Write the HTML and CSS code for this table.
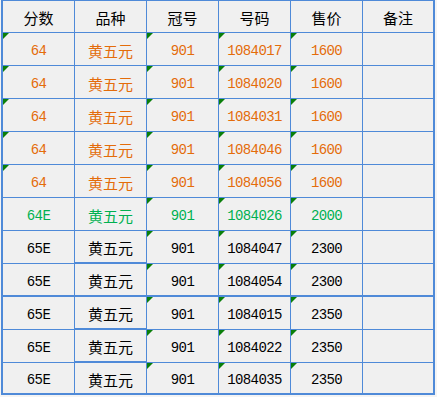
FILE: index.html
```html
<!DOCTYPE html>
<html lang="zh">
<head>
<meta charset="utf-8">
<title>Sheet</title>
<link rel="stylesheet" href="styles.css">
</head>
<body>
<table class="sheet">
  <tr class="head">
    <td>分数</td><td>品种</td><td>冠号</td><td>号码</td><td>售价</td><td class="last">备注</td>
  </tr>
  <tr class="orange">
    <td class="num"><i class="tri"></i>64</td><td class="cjk">黄五元</td><td class="num"><i class="tri"></i>901</td><td class="num"><i class="tri"></i>1084017</td><td class="num"><i class="tri"></i>1600</td><td class="last"></td>
  </tr>
  <tr class="orange">
    <td class="num"><i class="tri"></i>64</td><td class="cjk">黄五元</td><td class="num"><i class="tri"></i>901</td><td class="num"><i class="tri"></i>1084020</td><td class="num"><i class="tri"></i>1600</td><td class="last"></td>
  </tr>
  <tr class="orange">
    <td class="num"><i class="tri"></i>64</td><td class="cjk">黄五元</td><td class="num"><i class="tri"></i>901</td><td class="num"><i class="tri"></i>1084031</td><td class="num"><i class="tri"></i>1600</td><td class="last"></td>
  </tr>
  <tr class="orange">
    <td class="num"><i class="tri"></i>64</td><td class="cjk">黄五元</td><td class="num"><i class="tri"></i>901</td><td class="num"><i class="tri"></i>1084046</td><td class="num"><i class="tri"></i>1600</td><td class="last"></td>
  </tr>
  <tr class="orange">
    <td class="num"><i class="tri"></i>64</td><td class="cjk">黄五元</td><td class="num"><i class="tri"></i>901</td><td class="num"><i class="tri"></i>1084056</td><td class="num"><i class="tri"></i>1600</td><td class="last"></td>
  </tr>
  <tr class="green">
    <td class="num">64E</td><td class="cjk">黄五元</td><td class="num"><i class="tri"></i>901</td><td class="num"><i class="tri"></i>1084026</td><td class="num"><i class="tri"></i>2000</td><td class="last"></td>
  </tr>
  <tr class="black">
    <td class="num">65E</td><td class="cjk sel">黄五元</td><td class="num"><i class="tri"></i>901</td><td class="num"><i class="tri"></i>1084047</td><td class="num"><i class="tri"></i>2300</td><td class="last"></td>
  </tr>
  <tr class="black split">
    <td class="num">65E</td><td class="cjk">黄五元</td><td class="num"><i class="tri"></i>901</td><td class="num"><i class="tri"></i>1084054</td><td class="num"><i class="tri"></i>2300</td><td class="last"></td>
  </tr>
  <tr class="black">
    <td class="num">65E</td><td class="cjk sel">黄五元</td><td class="num"><i class="tri"></i>901</td><td class="num"><i class="tri"></i>1084015</td><td class="num"><i class="tri"></i>2350</td><td class="last"></td>
  </tr>
  <tr class="black">
    <td class="num">65E</td><td class="cjk sel">黄五元</td><td class="num"><i class="tri"></i>901</td><td class="num"><i class="tri"></i>1084022</td><td class="num"><i class="tri"></i>2350</td><td class="last"></td>
  </tr>
  <tr class="black end">
    <td class="num">65E</td><td class="cjk">黄五元</td><td class="num"><i class="tri"></i>901</td><td class="num"><i class="tri"></i>1084035</td><td class="num"><i class="tri"></i>2350</td><td class="last"></td>
  </tr>
</table>
</body>
</html>
```
FILE: styles.css
```css
html, body {
  margin: 0;
  padding: 0;
  background: #f4f4f4;
}

.sheet {
  margin-left: 1px;
  border-collapse: separate;
  border-spacing: 0;
  table-layout: fixed;
  border-top: 1px solid #4f8ad8;
  border-left: 2px solid #4f8ad8;
  border-right: 2px solid #4f8ad8;
  border-bottom: 2px solid #4f8ad8;
  background: #f0f0f0;
}

.sheet td {
  position: relative;
  box-sizing: border-box;
  width: 72px;
  height: 33px;
  padding: 3px 0 0 0;
  border-right: 1px solid #4f8ad8;
  border-bottom: 1px solid #4f8ad8;
  text-align: center;
  vertical-align: middle;
  white-space: nowrap;
  overflow: hidden;
  font-family: "Noto Sans CJK SC", sans-serif;
  font-size: 15px;
  line-height: 18px;
}

.sheet td.last {
  width: 70px;
  border-right: none;
}

.head td {
  height: 32px;
  color: #000;
  padding-top: 3px;
}

.sheet td.num {
  font-family: "Liberation Mono", monospace;
  font-size: 14px;
  letter-spacing: -0.6px;
  padding-top: 4px;
}

.sheet td.cjk {
  font-size: 15px;
}

.orange td { color: #e46c0a; }
.green td { color: #00b050; }
.black td { color: #000; }

.sheet td.sel {
  border-bottom: 2px solid #4f8ad8;
}

.split td {
  border-bottom: 2px solid #4f8ad8;
}

.end td {
  height: 30px;
  border-bottom: none;
}

.tri {
  position: absolute;
  left: 0;
  top: 0;
  width: 0;
  height: 0;
  border-top: 6px solid #0a7f0a;
  border-right: 6px solid transparent;
}
```
